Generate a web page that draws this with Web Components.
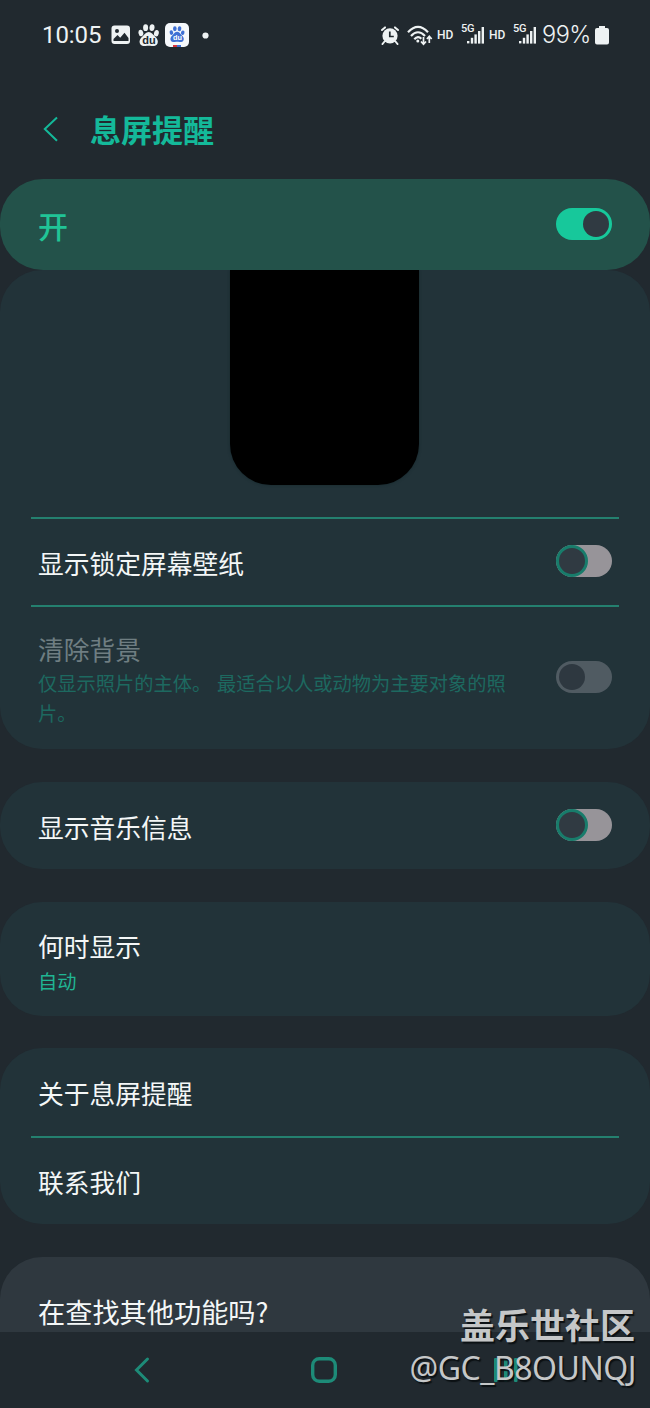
<!DOCTYPE html>
<html lang="zh-CN">
<head>
<meta charset="utf-8">
<title>息屏提醒</title>
<style>
html,body{margin:0;background:#21292f}
body{width:650px;height:1408px;overflow:hidden;font-family:"Noto Sans CJK SC",sans-serif;color:#f4f7f7}
</style>
</head>
<body>
<aod-screen></aod-screen>
<script>
const define = (name, html, init) => customElements.define(name, class extends HTMLElement {
  constructor() {
    super();
    const t = document.createElement('template');
    t.innerHTML = html;
    this.attachShadow({mode: 'open'}).append(t.content.cloneNode(true));
    if (init) init(this);
  }
});

const signal = `<svg width="20" height="18" viewBox="0 0 20 18" fill="#eef2f3"><rect x="0" y="15" width="2.4" height="2.4"/><rect x="3.8" y="11.8" width="2.4" height="5.8"/><rect x="7.4" y="8.4" width="2.4" height="9.2"/><rect x="11" y="5" width="2.4" height="12.6"/><rect x="14.6" y="1" width="2.4" height="16.6"/></svg>`;

const paw = (c) => `<g fill="${c}"><ellipse cx="2.9" cy="9" rx="2.4" ry="3.2" transform="rotate(-12 2.9 9)"/><ellipse cx="7.6" cy="3.7" rx="2.5" ry="3.4"/><ellipse cx="14" cy="3.7" rx="2.5" ry="3.4" transform="rotate(8 14 3.7)"/><ellipse cx="18.4" cy="9.2" rx="2.4" ry="3.2" transform="rotate(12 18.4 9.2)"/><path d="M10.7 8c2.9 0 4 2.300 6 4.200 2.800 2.500 3.800 4.900 2.800 7.300-1 2.500-4 2.700-5.800 2.400-2-.3-4-.3-6 0-1.800.3-4.800.1-5.800-2.400-1-2.400 0-4.800 2.800-7.300 2-1.900 3.100-4.200 6-4.200z"/></g>`;

define('status-bar', `
<style>
:host{display:flex;height:70px;box-sizing:border-box;padding:0 41px 0 42px;justify-content:space-between;align-items:center;font-family:Roboto,sans-serif;color:#eef2f3}
.g{display:flex;align-items:center;height:70px}
.time{font-size:24px;letter-spacing:-.1px;width:69px;line-height:28px}
svg{display:block;flex:none}
.hd{font-size:12px;font-weight:500;line-height:14px}
.net{font-size:11px;font-weight:500;line-height:12px;margin-bottom:13px;letter-spacing:-.3px;width:6px;white-space:nowrap}
.pct{font-family:Inter,sans-serif;font-weight:300;font-size:23.500px;line-height:28px;width:53px;letter-spacing:-.5px;white-space:nowrap}
svg text{font-family:"Liberation Sans",sans-serif;font-weight:700}
</style>
<div class="g">
  <span class="time">10:05</span>
  <svg width="20" height="20" viewBox="0 0 20 20"><rect x=".5" y=".5" width="18.500" height="18.500" rx="3" fill="#eef2f3"/><circle cx="6" cy="6" r="2" fill="#21292f"/><path d="M2.500 16v-2l4-4 2.700 2.700 4.300-5 4 5.300v3z" fill="#21292f"/></svg>
  <svg width="22" height="23" viewBox="0 0 22 23" style="margin-left:7px">${paw('#eef2f3')}<text x="4.200" y="19.800" font-size="11" fill="#21292f">du</text></svg>
  <svg width="24" height="24" viewBox="0 0 24 24" style="margin-left:5px"><rect width="24" height="24" rx="5" fill="#f5f8fb"/><g transform="translate(4.300 3) scale(.73)">${paw('#3f70d4')}<text x="5" y="19.500" font-size="10" fill="#fff">du</text></g><path d="M8 22h4v2H8z" fill="#d9343e"/><path d="M12 22h4v2h-4z" fill="#3f70d4"/></svg>
  <svg width="7" height="7" viewBox="0 0 7 7" style="margin-left:12.500px"><circle cx="3.500" cy="3.500" r="3.100" fill="#eef2f3"/></svg>
</div>
<div class="g">
  <svg width="18" height="19" viewBox="0 0 18 19"><circle cx="9" cy="9.800" r="7.600" fill="#eef2f3"/><path d="M1 4l3-2.600M17 4l-3-2.600M3.500 15.500l-2 2.500M14.500 15.500l2 2.500" stroke="#eef2f3" stroke-width="2" stroke-linecap="round"/><path d="M8.800 5.500v5h4" fill="none" stroke="#21292f" stroke-width="1.700"/></svg>
  <svg width="26" height="21" viewBox="0 0 26 21" style="margin-left:8px" fill="none" stroke="#eef2f3" stroke-width="2.200"><path d="M1 7.300Q11 -3.500 21 7.300M4 11Q11 3.500 18 11M7.300 14.300Q11 10.300 14.300 13.800"/><circle cx="10.800" cy="16" r="1.500" fill="#eef2f3" stroke="none"/><path d="M16.500 12v7M14 16.500l2.500 2.800 2.500-2.800M22.300 18v-6.500M19.900 14l2.400-2.800 2.400 2.800" stroke-width="1.700"/></svg>
  <span class="hd" style="margin-left:4px;width:24px">HD</span>
  <span class="net">5G</span>${signal}
  <span class="hd" style="margin-left:2px;width:24px">HD</span>
  <span class="net">5G</span>${signal}
  <span class="pct" style="margin-left:3px">99%</span>
  <svg width="14" height="19" viewBox="0 0 14 19" fill="#eef2f3"><path d="M4 0h6v2h2a2 2 0 0 1 2 2v12.500a2 2 0 0 1-2 2H2a2 2 0 0 1-2-2V4a2 2 0 0 1 2-2h2z"/></svg>
</div>`);

define('page-header', `
<style>
:host{display:flex;height:109px;box-sizing:border-box;padding:38px 0 0 43px;align-items:flex-start;color:#14b99a}
svg{display:block;margin-top:8px}
h1{margin:0 0 0 31px;font-size:31px;line-height:42px;font-weight:700}
</style>
<svg width="16" height="26" viewBox="0 0 16 26" fill="none" stroke="currentColor" stroke-width="2"><path d="M14 1.500L1.800 13 14 24.700"/></svg>
<h1><slot></slot></h1>`);

define('toggle-switch', `
<style>
:host{display:block;flex:none;width:56px;height:32px;border-radius:16px;background:#979499;box-sizing:border-box;margin-bottom:2px}
i{display:block;box-sizing:border-box;width:32px;height:32px;border-radius:50%;background:#303a42;border:3.500px solid #187c6b}
:host([state=on]){background:#17c89b;padding:3px 3px 3px 27px}
:host([state=on]) i{width:26px;height:26px;border:0}
:host([state=disabled]){background:#505b62;padding:3px}
:host([state=disabled]) i{width:26px;height:26px;border:0;background:#2e3840}
</style><i></i>`);

define('master-switch', `
<style>
:host{display:flex;height:91px;box-sizing:border-box;padding:0 38px;border-radius:43px;background:#23524a;align-items:center;justify-content:space-between;color:#20c496}
span{font-size:30px;line-height:40px;font-weight:500}
</style><span><slot></slot></span><toggle-switch state="on"></toggle-switch>`);

define('setting-card', `
<style>
:host{display:block;border-radius:42px;background:#223339;margin-bottom:var(--gap,33px);overflow:hidden;flex:none}
</style><slot></slot>`);

define('phone-preview', `
<style>
:host{display:flex;justify-content:center;height:247px}
div{width:189.500px;height:215px;background:#000;border-radius:0 0 41px 41px;box-shadow:0 0 3px #16282d;margin-right:1px}
</style><div></div>`);

define('divider-line', `<style>:host{display:block;height:2px;margin:0 31px;background:#24806f}</style>`);

define('setting-row', `
<style>
:host{display:flex;box-sizing:border-box;height:var(--h,87px);padding:0 38px;align-items:center;justify-content:space-between}
.x{padding-top:2px}
.t{font-size:25.750px;line-height:38px;white-space:nowrap}
.d{font-size:19.250px;line-height:30px;color:#20b593;width:475px}
:host([tall]) .x{align-self:flex-start;padding-top:25px}
:host([tall]) .d{padding-top:1px}
:host([off]) .x{padding-top:23px}
:host([off]) .d{padding-top:0}
:host([off]) .t{color:#6f7e82}
:host([off]) .d{color:#1d6960;word-spacing:1.500px}
</style>
<div class="x"><div class="t"><slot></slot></div><div class="d"><slot name="detail"></slot></div></div>
<slot name="control"></slot>`, el => {
  if (!el.querySelector('[slot=detail]')) el.shadowRoot.querySelector('.d').remove();
});

define('search-hint', `
<style>
:host{display:block;box-sizing:border-box;height:75px;padding:34px 38px 0;background:#2f383f;border-radius:42px 42px 0 0;font-size:27.200px;line-height:40px}
</style><slot></slot>`);

define('nav-bar', `
<style>
:host{display:grid;grid-template-columns:182px 182px 182px;justify-content:center;align-items:center;height:76px;background:#21292f;color:#1d8b78;padding-right:2px}
svg{display:block;margin:auto}
</style>
<svg width="16" height="28" viewBox="0 0 16 28" fill="none" stroke="currentColor" stroke-width="3" stroke-linecap="round"><path d="M13.500 3L2.500 14l11 11"/></svg>
<svg width="28" height="28" viewBox="0 0 28 28" fill="none" stroke="currentColor" stroke-width="3.400"><rect x="2.700" y="2.700" width="22.600" height="22.600" rx="6.500"/></svg>
<svg width="24" height="26" viewBox="0 0 24 26" fill="currentColor"><rect x="0" y="1" width="3.500" height="24" rx="1"/><rect x="10" y="1" width="3.500" height="24" rx="1"/><rect x="20" y="1" width="3.500" height="24" rx="1"/></svg>`);

define('water-mark', `
<style>
:host{position:absolute;right:15px;bottom:18px;text-align:right;color:#c5c7c8;text-shadow:1.500px 1.500px 1px #0b1013;white-space:nowrap}
b{display:block;font-size:35px;line-height:45px;font-weight:700}
span{display:block;font-family:"Noto Sans","Noto Sans CJK SC",sans-serif;font-size:32px;line-height:44px;letter-spacing:-.5px;margin-right:-1px}
</style><b>盖乐世社区</b><span>@GC_B8OUNQJ</span>`);

define('aod-screen', `
<style>
:host{display:flex;flex-direction:column;position:relative;width:650px;height:1408px;background:#21292f;overflow:hidden}
:host>*{flex:none}
</style>
<status-bar></status-bar>
<page-header>息屏提醒</page-header>
<master-switch>开</master-switch>
<setting-card>
  <phone-preview></phone-preview>
  <divider-line></divider-line>
  <setting-row style="--h:86px">显示锁定屏幕壁纸<toggle-switch slot="control"></toggle-switch></setting-row>
  <divider-line></divider-line>
  <setting-row tall off style="--h:142px">清除背景<span slot="detail">仅显示照片的主体。 最适合以人或动物为主要对象的照片。</span><toggle-switch slot="control" state="disabled"></toggle-switch></setting-row>
</setting-card>
<setting-card><setting-row>显示音乐信息<toggle-switch slot="control"></toggle-switch></setting-row></setting-card>
<setting-card style="--gap:32px"><setting-row tall style="--h:114px">何时显示<span slot="detail">自动</span></setting-row></setting-card>
<setting-card>
  <setting-row style="--h:88px">关于息屏提醒</setting-row>
  <divider-line></divider-line>
  <setting-row style="--h:86px">联系我们</setting-row>
</setting-card>
<search-hint>在查找其他功能吗?</search-hint>
<nav-bar></nav-bar>
<water-mark></water-mark>`);
</script>
</body>
</html>
